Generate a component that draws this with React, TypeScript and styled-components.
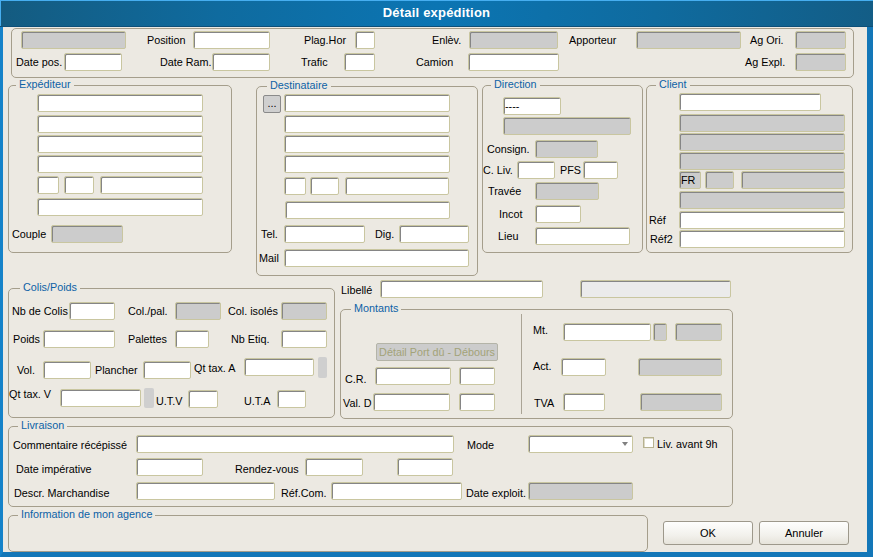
import * as React from 'react';
import styled, { createGlobalStyle } from 'styled-components';

const FACE = '#ece9e2';

const GlobalStyle = createGlobalStyle`
  html, body {
    margin: 0;
    padding: 0;
    background: ${FACE};
  }
  body {
    font-family: "Liberation Sans", Arial, sans-serif;
    font-size: 10.8px;
    color: #000;
  }
`;

type Variant = 'white' | 'grey' | 'light' | 'plain';

interface Item {
  k: 'lbl' | 'inp' | 'dots' | 'cmd' | 'sel' | 'chk';
  x: number;
  y?: number;
  w?: number;
  h?: number;
  t?: string;
  v?: Variant;
}

interface Line {
  y: number;
  items: Item[];
}

const Window = styled.div`
  width: 873px;
  height: 557px;
  display: flex;
  flex-direction: column;
  overflow: hidden;
`;

const TitleBar = styled.div`
  box-sizing: border-box;
  height: 27px;
  flex-shrink: 0;
  background: linear-gradient(to right, #145b80 0%, #0f6b9f 25%, #0b75b3 50%, #0f6b9f 75%, #135d86 100%);
  box-shadow: inset 1px 1px 0 #46aef0;
  border-bottom: 1px solid #0d4f78;
  color: #fff;
  font-weight: bold;
  font-size: 13px;
  letter-spacing: 0.2px;
  line-height: 26px;
  text-align: center;
`;

const Frame = styled.div`
  flex: 1;
  box-sizing: border-box;
  border-left: 3px solid #1683c9;
  border-right: 6px solid #1377b8;
  border-bottom: 5px solid #1377b8;
  padding-left: 5px;
  display: flex;
  flex-direction: column;
  background: ${FACE};
`;

const Section = styled.div<{ $mt: number; $h?: number }>`
  display: flex;
  align-items: flex-start;
  flex-shrink: 0;
  margin-top: ${p => p.$mt}px;
  ${p => (p.$h ? `height: ${p.$h}px;` : '')}
`;

const Column = styled.div<{ $ml?: number; $w: number }>`
  display: flex;
  flex-direction: column;
  flex-shrink: 0;
  margin-left: ${p => p.$ml ?? 0}px;
  width: ${p => p.$w}px;
`;

const Group = styled.div<{ $w: number; $h: number; $ml?: number; $mt?: number }>`
  position: relative;
  box-sizing: border-box;
  flex-shrink: 0;
  display: flex;
  flex-direction: column;
  width: ${p => p.$w}px;
  height: ${p => p.$h}px;
  margin-left: ${p => p.$ml ?? 0}px;
  margin-top: ${p => p.$mt ?? 0}px;
  border: 1px solid #a59e8c;
  border-radius: 5px;
`;

const Legend = styled.span<{ $x: number }>`
  position: absolute;
  top: -8px;
  left: ${p => p.$x}px;
  padding: 0 3px;
  line-height: 13px;
  background: ${FACE};
  color: #0d62a6;
  white-space: nowrap;
`;

const Split = styled.div`
  display: flex;
  margin-top: 4px;
  height: 100px;
`;

const Pane = styled.div<{ $w: number; $rule?: boolean }>`
  box-sizing: border-box;
  display: flex;
  flex-direction: column;
  width: ${p => p.$w}px;
  ${p => (p.$rule ? 'border-left: 1px solid #aaa496;' : '')}
`;

const Row = styled.div<{ $mt: number; $h: number }>`
  display: flex;
  align-items: flex-start;
  flex-shrink: 0;
  margin-top: ${p => p.$mt}px;
  height: ${p => p.$h}px;
`;

interface Place {
  $ml: number;
  $dy: number;
}

const Label = styled.span<Place & { $w?: number }>`
  flex-shrink: 0;
  margin-left: ${p => p.$ml}px;
  margin-top: ${p => p.$dy}px;
  width: ${p => (p.$w !== undefined ? `${p.$w}px` : 'auto')};
  height: 18px;
  line-height: 18px;
  white-space: nowrap;
`;

const fills: Record<Variant, string> = {
  white: '#ffffff',
  grey: '#cccccc',
  light: '#ebebeb',
  plain: '#cfcfcf',
};

const Field = styled.input<Place & { $w: number; $h: number; $v: Variant }>`
  box-sizing: border-box;
  flex-shrink: 0;
  margin: 0;
  margin-left: ${p => p.$ml}px;
  margin-top: ${p => p.$dy}px;
  width: ${p => p.$w}px;
  height: ${p => p.$h}px;
  padding: 0 1px;
  font: inherit;
  color: #000;
  outline: none;
  background: ${p => fills[p.$v]};
  border: ${p => (p.$v === 'plain' ? 'none' : '1px solid #c9c6a0')};
  border-radius: 2px;
  box-shadow: ${p => (p.$v === 'plain' ? 'none' : 'inset 1px 1px 0 #858585')};
`;

const DotsButton = styled.button<Place & { $w: number; $h: number }>`
  box-sizing: border-box;
  flex-shrink: 0;
  margin: 0;
  margin-left: ${p => p.$ml}px;
  margin-top: ${p => p.$dy}px;
  width: ${p => p.$w}px;
  height: ${p => p.$h}px;
  padding: 0 0 3px;
  font: inherit;
  line-height: 12px;
  color: #000;
  background: #cfcfcf;
  border: 1px solid #8a8a8a;
  border-radius: 2px;
`;

const CommandDisabled = styled.button<Place & { $w: number; $h: number }>`
  box-sizing: border-box;
  flex-shrink: 0;
  margin: 0;
  margin-left: ${p => p.$ml}px;
  margin-top: ${p => p.$dy}px;
  width: ${p => p.$w}px;
  height: ${p => p.$h}px;
  padding: 0;
  font: inherit;
  color: #a3a378;
  background: #cccccc;
  border: 1px solid #b4b4a8;
  border-radius: 2px;
  white-space: nowrap;
`;

const Select = styled.div<Place & { $w: number; $h: number }>`
  box-sizing: border-box;
  flex-shrink: 0;
  display: flex;
  align-items: center;
  justify-content: flex-end;
  margin-left: ${p => p.$ml}px;
  margin-top: ${p => p.$dy}px;
  width: ${p => p.$w}px;
  height: ${p => p.$h}px;
  padding-right: 4px;
  background: #fff;
  border: 1px solid #c9c6a0;
  border-radius: 2px;
  box-shadow: inset 1px 1px 0 #858585;
`;

const Caret = styled.span`
  width: 0;
  height: 0;
  border-left: 3px solid transparent;
  border-right: 3px solid transparent;
  border-top: 4px solid #808080;
`;

const CheckBox = styled.span<Place & { $w: number; $h: number }>`
  box-sizing: border-box;
  flex-shrink: 0;
  margin-left: ${p => p.$ml}px;
  margin-top: ${p => p.$dy}px;
  width: ${p => p.$w}px;
  height: ${p => p.$h}px;
  background: #fff;
  border: 1px solid #b7b290;
  box-shadow: inset 1px 1px 0 #dcd9c8;
`;

const PushButton = styled.button<{ $ml: number }>`
  box-sizing: border-box;
  flex-shrink: 0;
  margin: 6px 0 0 ${p => p.$ml}px;
  width: 90px;
  height: 24px;
  padding: 0;
  font: inherit;
  font-size: 11px;
  color: #000;
  background: linear-gradient(#fefefd, #f2f1ec 60%, #e6e3da);
  border: 1px solid #9d988b;
  border-radius: 3px;
`;

const defaultHeight = (it: Item) => (it.k === 'chk' ? 11 : 18);

const Rows: React.FC<{ lines: Line[]; ox: number; oy: number }> = ({ lines, ox, oy }) => {
  let bottom = oy;
  return (
    <>
      {lines.map((line, i) => {
        const h = Math.max(
          ...line.items.map(it => (it.y ?? line.y) - line.y + (it.h ?? defaultHeight(it))),
        );
        const mt = line.y - bottom;
        bottom = line.y + h;
        let right = ox;
        return (
          <Row key={i} $mt={mt} $h={h}>
            {line.items.map((it, j) => {
              const next = line.items[j + 1];
              const w = it.w ?? (next ? next.x - it.x : undefined);
              const ml = it.x - right;
              right = it.x + (w ?? 0);
              const dy = (it.y ?? line.y) - line.y;
              const ih = it.h ?? defaultHeight(it);
              switch (it.k) {
                case 'lbl':
                  return (
                    <Label key={j} $ml={ml} $dy={dy} $w={w}>
                      {it.t}
                    </Label>
                  );
                case 'dots':
                  return (
                    <DotsButton key={j} $ml={ml} $dy={dy} $w={w ?? 18} $h={ih}>
                      {it.t}
                    </DotsButton>
                  );
                case 'cmd':
                  return (
                    <CommandDisabled key={j} $ml={ml} $dy={dy} $w={w ?? 100} $h={ih}>
                      {it.t}
                    </CommandDisabled>
                  );
                case 'sel':
                  return (
                    <Select key={j} $ml={ml} $dy={dy} $w={w ?? 100} $h={ih}>
                      <Caret />
                    </Select>
                  );
                case 'chk':
                  return <CheckBox key={j} $ml={ml} $dy={dy} $w={w ?? 11} $h={ih} />;
                default:
                  return (
                    <Field
                      key={j}
                      readOnly
                      defaultValue={it.t ?? ''}
                      $ml={ml}
                      $dy={dy}
                      $w={w ?? 50}
                      $h={ih}
                      $v={it.v ?? 'white'}
                    />
                  );
              }
            })}
          </Row>
        );
      })}
    </>
  );
};

const inp = (x: number, w: number, v: Variant = 'white', extra: Partial<Item> = {}): Item => ({
  k: 'inp',
  x,
  w,
  v,
  ...extra,
});
const lbl = (x: number, t: string, y?: number): Item => ({ k: 'lbl', x, t, y });

const topLines: Line[] = [
  {
    y: 31,
    items: [
      inp(21, 105, 'grey'),
      lbl(147, 'Position'),
      inp(193, 77),
      lbl(304, 'Plag.Hor'),
      inp(355, 20),
      lbl(432, 'Enlèv.'),
      inp(469, 89, 'grey'),
      lbl(569, 'Apporteur'),
      inp(636, 105, 'grey'),
      lbl(750, 'Ag Ori.'),
      inp(795, 51, 'grey'),
    ],
  },
  {
    y: 53,
    items: [
      lbl(16, 'Date pos.'),
      inp(64, 58),
      lbl(160, 'Date Ram.'),
      inp(212, 58),
      lbl(301, 'Trafic'),
      inp(344, 31),
      lbl(416, 'Camion'),
      inp(468, 91),
      lbl(745, 'Ag Expl.'),
      inp(795, 51, 'grey'),
    ],
  },
];

const expLines: Line[] = [
  { y: 94, items: [inp(37, 166)] },
  { y: 115, items: [inp(37, 166)] },
  { y: 135, items: [inp(37, 166)] },
  { y: 155, items: [inp(37, 166)] },
  { y: 176, items: [inp(37, 22), inp(64, 30), inp(100, 103)] },
  { y: 198, items: [inp(37, 166)] },
  { y: 225, items: [lbl(12, 'Couple'), inp(51, 72, 'grey')] },
];

const destLines: Line[] = [
  { y: 94, items: [{ k: 'dots', x: 263, y: 95, w: 18, h: 18, t: '...' }, inp(284, 166)] },
  { y: 115, items: [inp(284, 166)] },
  { y: 135, items: [inp(284, 166)] },
  { y: 155, items: [inp(284, 166)] },
  { y: 177, items: [inp(284, 22), inp(310, 29), inp(345, 104)] },
  { y: 201, items: [inp(285, 165)] },
  { y: 225, items: [lbl(261, 'Tel.'), inp(284, 81), lbl(375, 'Dig.'), inp(399, 70)] },
  { y: 249, items: [lbl(259, 'Mail'), inp(284, 185)] },
];

const dirLines: Line[] = [
  { y: 97, items: [inp(503, 58, 'white', { t: '----' })] },
  { y: 117, items: [inp(503, 128, 'grey')] },
  { y: 140, items: [lbl(487, 'Consign.'), inp(535, 63, 'grey')] },
  { y: 161, items: [lbl(483, 'C. Liv.'), inp(517, 38), lbl(560, 'PFS'), inp(583, 35)] },
  { y: 182, items: [lbl(488, 'Travée'), inp(535, 64, 'grey')] },
  { y: 205, items: [lbl(499, 'Incot'), inp(535, 46)] },
  { y: 227, items: [lbl(498, 'Lieu'), inp(535, 95)] },
];

const clientLines: Line[] = [
  { y: 93, items: [inp(679, 142)] },
  { y: 114, items: [inp(679, 166, 'grey')] },
  { y: 133, items: [inp(679, 166, 'grey')] },
  { y: 152, items: [inp(679, 166, 'grey')] },
  { y: 171, items: [inp(679, 22, 'grey', { t: 'FR' }), inp(705, 29, 'grey'), inp(741, 104, 'grey')] },
  { y: 191, items: [inp(679, 166, 'grey')] },
  { y: 211, items: [lbl(649, 'Réf'), inp(679, 166)] },
  { y: 230, items: [lbl(650, 'Réf2'), inp(679, 166)] },
];

const colisLines: Line[] = [
  {
    y: 302,
    items: [
      lbl(12, 'Nb de Colis'),
      inp(69, 46),
      lbl(128, 'Col./pal.'),
      inp(175, 46, 'grey'),
      lbl(228, 'Col. isolés'),
      inp(281, 46, 'grey'),
    ],
  },
  {
    y: 330,
    items: [
      lbl(13, 'Poids'),
      inp(43, 72),
      lbl(128, 'Palettes'),
      inp(175, 34),
      lbl(231, 'Nb Etiq.'),
      inp(281, 46),
    ],
  },
  {
    y: 357,
    items: [
      lbl(17, 'Vol.', 361),
      inp(43, 48, 'white', { y: 361 }),
      lbl(95, 'Plancher', 361),
      inp(143, 48, 'white', { y: 361 }),
      lbl(194, 'Qt tax. A', 359),
      inp(244, 70, 'white', { y: 358 }),
      inp(318, 9, 'plain', { y: 357, h: 21 }),
    ],
  },
  {
    y: 385,
    items: [
      lbl(9, 'Qt tax. V', 385),
      inp(60, 81, 'white', { y: 389 }),
      inp(144, 10, 'plain', { y: 388, h: 20 }),
      lbl(156, 'U.T.V', 392),
      inp(188, 30, 'white', { y: 390 }),
      lbl(244, 'U.T.A', 392),
      inp(277, 29, 'white', { y: 390 }),
    ],
  },
];

const libelleLines: Line[] = [
  { y: 280, items: [lbl(341, 'Libellé', 281), inp(380, 163), inp(580, 151, 'light')] },
];

const montLeftLines: Line[] = [
  { y: 342, items: [{ k: 'cmd', x: 376, w: 122, h: 18, t: 'Détail Port dû - Débours' }] },
  { y: 366, items: [lbl(345, 'C.R.', 369), inp(375, 76), inp(459, 36)] },
  { y: 392, items: [lbl(343, 'Val. D', 393), inp(373, 77), inp(459, 36)] },
];

const montRightLines: Line[] = [
  {
    y: 320,
    items: [
      lbl(533, 'Mt.'),
      inp(563, 88, 'white', { y: 322 }),
      inp(653, 14, 'grey', { y: 322 }),
      inp(675, 47, 'grey', { y: 322 }),
    ],
  },
  { y: 356, items: [lbl(533, 'Act.'), inp(561, 45, 'white', { y: 357 }), inp(638, 84, 'grey', { y: 357 })] },
  { y: 392, items: [lbl(534, 'TVA', 393), inp(563, 42), inp(640, 82, 'grey')] },
];

const livLines: Line[] = [
  {
    y: 434,
    items: [
      lbl(13, 'Commentaire récépissé', 435),
      inp(136, 318),
      lbl(467, 'Mode', 435),
      { k: 'sel', x: 528, w: 105 },
      { k: 'chk', x: 643, y: 436, w: 11, h: 11 },
      lbl(657, 'Liv. avant 9h'),
    ],
  },
  {
    y: 457,
    items: [
      lbl(16, 'Date impérative', 459),
      inp(136, 67),
      lbl(235, 'Rendez-vous', 459),
      inp(305, 58),
      inp(397, 56),
    ],
  },
  {
    y: 481,
    items: [
      lbl(14, 'Descr. Marchandise', 483),
      inp(136, 139),
      lbl(281, 'Réf.Com.', 483),
      inp(331, 131),
      lbl(466, 'Date exploit.', 483),
      inp(528, 105, 'grey'),
    ],
  },
];

const App: React.FC = () => (
  <Window>
    <GlobalStyle />
    <TitleBar>Détail expédition</TitleBar>
    <Frame>
      <Group $w={843} $h={50} $ml={3} $mt={1}>
        <Rows lines={topLines} ox={12} oy={29} />
      </Group>

      <Section $mt={7} $h={191}>
        <Group $w={224} $h={168}>
          <Legend $x={7}>Expéditeur</Legend>
          <Rows lines={expLines} ox={9} oy={86} />
        </Group>
        <Group $w={222} $h={190} $ml={24} $mt={1}>
          <Legend $x={10}>Destinataire</Legend>
          <Rows lines={destLines} ox={257} oy={87} />
        </Group>
        <Group $w={161} $h={168} $ml={4}>
          <Legend $x={8}>Direction</Legend>
          <Rows lines={dirLines} ox={483} oy={86} />
        </Group>
        <Group $w={207} $h={168} $ml={3}>
          <Legend $x={9}>Client</Legend>
          <Rows lines={clientLines} ox={647} oy={86} />
        </Group>
      </Section>

      <Section $mt={0}>
        <Group $w={327} $h={130} $mt={12}>
          <Legend $x={11}>Colis/Poids</Legend>
          <Rows lines={colisLines} ox={9} oy={289} />
        </Group>
        <Column $ml={5} $w={393}>
          <Rows lines={libelleLines} ox={340} oy={276} />
          <Group $w={393} $h={110} $mt={10}>
            <Legend $x={10}>Montants</Legend>
            <Split>
              <Pane $w={180}>
                <Rows lines={montLeftLines} ox={341} oy={313} />
              </Pane>
              <Pane $w={211} $rule>
                <Rows lines={montRightLines} ox={522} oy={313} />
              </Pane>
            </Split>
          </Group>
        </Column>
      </Section>

      <Group $w={725} $h={81} $mt={7}>
        <Legend $x={9}>Livraison</Legend>
        <Rows lines={livLines} ox={9} oy={426} />
      </Group>

      <Section $mt={8}>
        <Group $w={640} $h={37}>
          <Legend $x={9}>Information de mon agence</Legend>
        </Group>
        <PushButton $ml={15}>OK</PushButton>
        <PushButton $ml={6}>Annuler</PushButton>
      </Section>
    </Frame>
  </Window>
);

export default App;
